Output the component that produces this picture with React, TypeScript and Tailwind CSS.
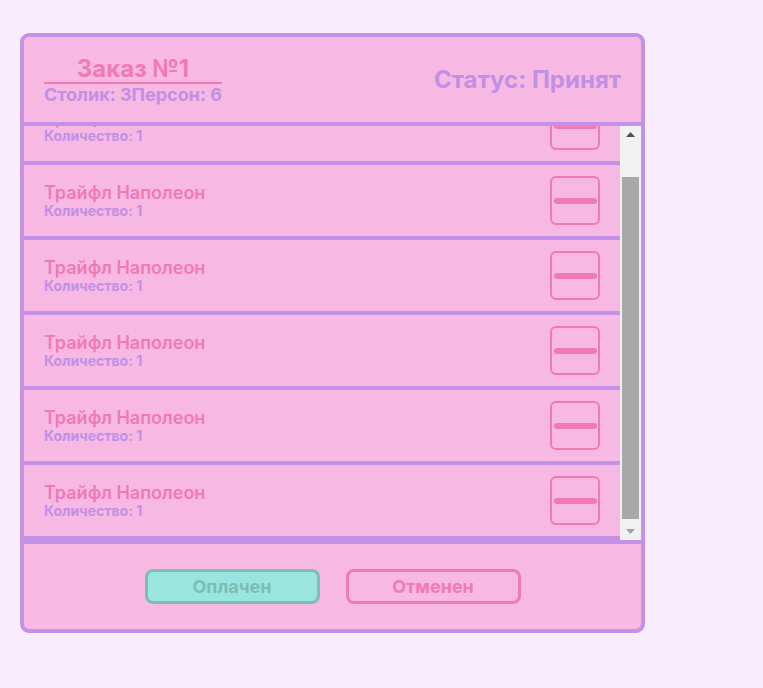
import { useEffect, useRef } from "react";

const ITEMS = Array.from({ length: 6 }, (_, i) => ({
  id: i + 1,
  name: "Трайфл Наполеон",
  qty: 1,
}));

export default function App() {
  const listRef = useRef<HTMLDivElement>(null);

  // list is shown scrolled to the end
  useEffect(() => {
    if (listRef.current) listRef.current.scrollTop = listRef.current.scrollHeight;
  }, []);

  return (
    <div
      className="min-h-screen bg-[#f8edfd] pl-5 pt-[33px]"
      style={{ fontFamily: "Inter, 'Noto Sans', sans-serif" }}
    >
      <div className="flex h-[600px] w-[625px] flex-col overflow-hidden rounded-[9px] border-4 border-[#c391e6] bg-[#f7b8e4]">
        {/* Header */}
        <div className="flex h-[89px] shrink-0 items-center justify-between border-b-4 border-[#c391e6] px-5">
          <div className="flex flex-col">
            <h2 className="border-b-2 border-[#f07ab5] text-center text-[24px] font-bold leading-[27px] text-[#f07ab5]">
              Заказ №1
            </h2>
            <p className="text-[18px] font-bold leading-[21px] text-[#c190e6]">
              Столик: 3Персон: 6
            </p>
          </div>
          <p className="text-[24px] font-bold text-[#c190e6]">Статус: Принят</p>
        </div>

        {/* Items + scrollbar */}
        <div className="flex h-[414px] shrink-0">
          <div
            ref={listRef}
            className="flex-1 overflow-y-scroll [scrollbar-width:none]"
          >
            {ITEMS.map((item) => (
              <div
                key={item.id}
                className="flex h-[75px] items-center justify-between border-b-4 border-[#c391e6] pl-5 pr-5"
              >
                <div className="flex flex-col">
                  <span className="text-[18px] font-semibold leading-[21px] text-[#f07ab5]">{item.name}</span>
                  <span className="text-[14px] font-bold leading-[16px] text-[#c190e6]">
                    Количество: {item.qty}
                  </span>
                </div>
                <button className="flex h-[49px] w-[50px] items-center justify-center rounded-[6px] border-2 border-[#f07ab5]">
                  <span className="block h-[6px] w-[43px] rounded-full bg-[#f07ab5]" />
                </button>
              </div>
            ))}
          </div>

          {/* Scrollbar */}
          <div className="flex w-[21px] flex-col bg-[#f1f1f1]">
            <div className="flex h-[17px] items-center justify-center">
              <svg width="9" height="5" viewBox="0 0 9 5">
                <path d="M4.5 0L9 5H0z" fill="#505050" />
              </svg>
            </div>
            <div className="flex-1 px-[2px]">
              <div className="mt-[34px] h-[342px] bg-[#a8a8a8]" />
            </div>
            <div className="flex h-[17px] items-center justify-center">
              <svg width="9" height="5" viewBox="0 0 9 5">
                <path d="M0 0H9L4.5 5z" fill="#a3a3a3" />
              </svg>
            </div>
          </div>
        </div>

        {/* Footer */}
        <div className="flex flex-1 items-center justify-center gap-[26px] border-t-4 border-[#c391e6]">
          <button className="h-[35px] w-[175px] rounded-[8px] border-[3px] border-[#7cbdb6] bg-[#9ae5df] text-[18px] font-bold text-[#7cbdb6]">
            Оплачен
          </button>
          <button className="h-[35px] w-[175px] rounded-[8px] border-[3px] border-[#f07ab5] text-[18px] font-bold text-[#f07ab5]">
            Отменен
          </button>
        </div>
      </div>
    </div>
  );
}
